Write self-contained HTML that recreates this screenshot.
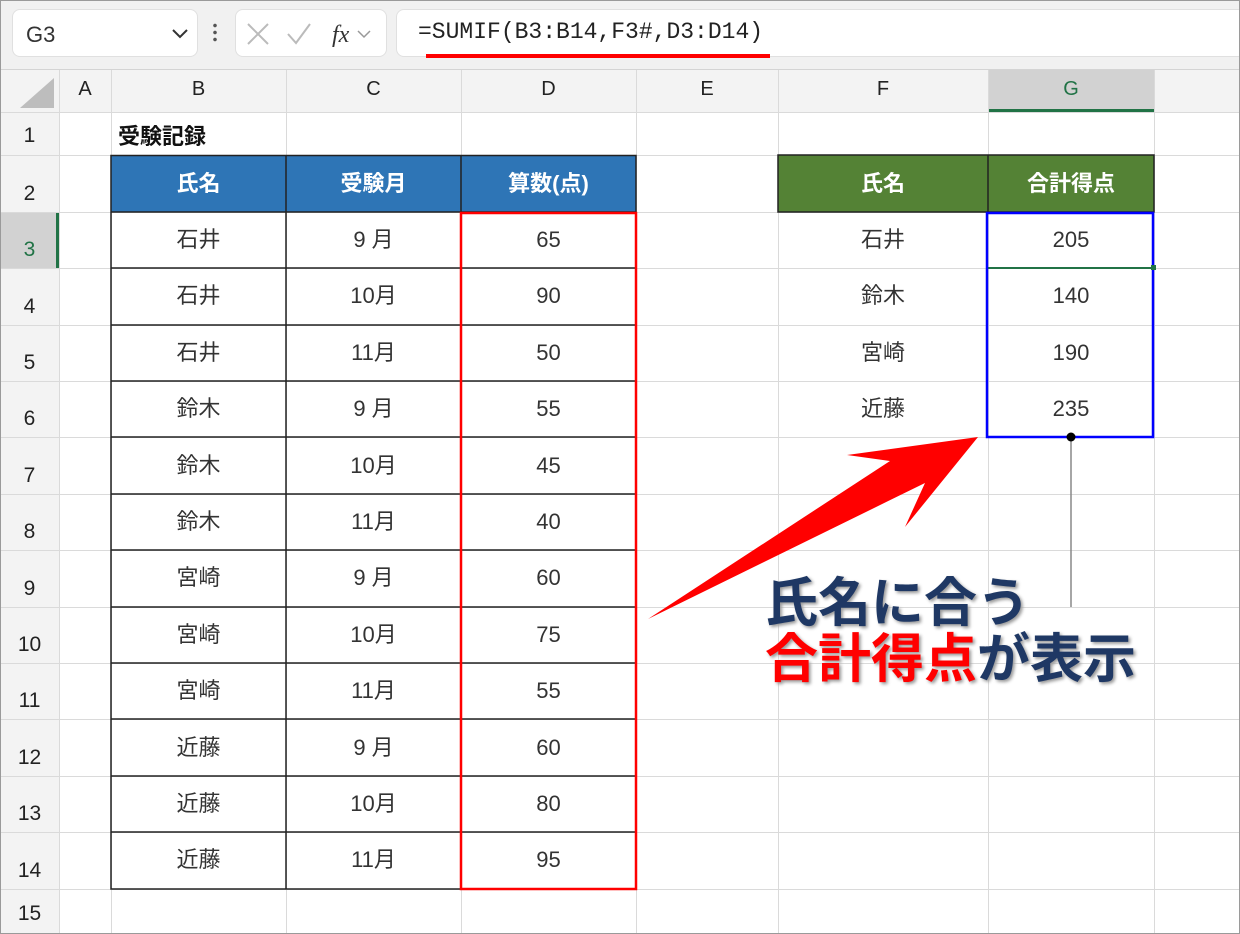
<!DOCTYPE html>
<html><head><meta charset="utf-8"><style>
*{margin:0;padding:0;box-sizing:border-box}
body{width:1240px;height:934px;position:relative;overflow:hidden;background:#fff;font-family:"Liberation Sans","Noto Sans CJK JP",sans-serif;}
.a{position:absolute}
.vl{position:absolute;top:70px;width:1px;height:864px;background:#dadada}
.hl{position:absolute;left:0;height:1px;width:1240px;background:#dadada}
.rn{position:absolute;left:0;width:59px;text-align:center;font-size:21px;color:#222;margin-top:2px}
.ch{position:absolute;top:72px;height:42px;line-height:34px;text-align:center;font-size:20px;color:#222;}
.c{position:absolute;text-align:center;font-size:22px;color:#333;}
</style></head><body>
<div class="a" style="left:0;top:0;width:1240px;height:70px;background:#f1f1f1;border-bottom:1px solid #d4d4d4"></div>
<div class="a" style="left:12px;top:9px;width:186px;height:48px;background:#fff;border:1px solid #e0e0e0;border-radius:8px"></div>
<div class="a" style="left:26px;top:22px;font-size:22px;color:#333">G3</div>
<svg class="a" style="left:170px;top:26px" width="20" height="14"><path d="M3 4 L10 11 L17 4" stroke="#333" stroke-width="2" fill="none"/></svg>
<div class="a" style="left:213px;top:22px;width:4px;height:22px;background:radial-gradient(circle,#555 1.6px,transparent 2px) 0 0/4px 7px"></div>
<div class="a" style="left:235px;top:9px;width:152px;height:48px;background:#fff;border:1px solid #e0e0e0;border-radius:8px"></div>
<svg class="a" style="left:244px;top:20px" width="140" height="28"><path d="M4 4 L24 24 M24 4 L4 24" stroke="#bbb" stroke-width="2"/><path d="M44 14 L52 23 L66 4" stroke="#bbb" stroke-width="2" fill="none"/><text x="88" y="22" font-family="Liberation Serif" font-style="italic" font-size="24" fill="#333">fx</text><path d="M114 11 L120 17 L126 11" stroke="#999" stroke-width="1.5" fill="none"/></svg>
<div class="a" style="left:396px;top:9px;width:850px;height:48px;background:#fff;border:1px solid #e0e0e0;border-radius:8px"></div>
<div class="a" style="left:418px;top:19px;font-family:'Liberation Mono',monospace;font-size:23px;color:#222;">=SUMIF(B3:B14,F3#,D3:D14)</div>
<div class="a" style="left:426px;top:54px;width:344px;height:4px;background:#f00"></div>
<div class="a" style="left:0;top:70px;width:1240px;height:42px;background:#f3f3f3"></div>
<div class="a" style="left:0;top:70px;width:59px;height:864px;background:#f3f3f3"></div>
<svg class="a" style="left:14px;top:76px" width="42" height="34"><path d="M40 2 L40 32 L6 32 Z" fill="#bdbdbd"/></svg>
<div class="a" style="left:988px;top:70px;width:166px;height:42px;background:#d2d2d2;border-bottom:3px solid #217346"></div>
<div class="a" style="left:0;top:212px;width:59px;height:56px;background:#d2d2d2;border-right:3px solid #217346"></div>
<div class="vl" style="left:59px"></div><div class="vl" style="left:111px"></div><div class="vl" style="left:286px"></div><div class="vl" style="left:461px"></div><div class="vl" style="left:636px"></div><div class="vl" style="left:778px"></div><div class="vl" style="left:988px"></div><div class="vl" style="left:1154px"></div>
<div class="hl" style="top:112px"></div><div class="hl" style="top:155px"></div><div class="hl" style="top:212px"></div><div class="hl" style="top:268px"></div><div class="hl" style="top:325px"></div><div class="hl" style="top:381px"></div><div class="hl" style="top:437px"></div><div class="hl" style="top:494px"></div><div class="hl" style="top:550px"></div><div class="hl" style="top:607px"></div><div class="hl" style="top:663px"></div><div class="hl" style="top:719px"></div><div class="hl" style="top:776px"></div><div class="hl" style="top:832px"></div><div class="hl" style="top:889px"></div>
<div class="ch" style="left:59px;width:52px">A</div><div class="ch" style="left:111px;width:175px">B</div><div class="ch" style="left:286px;width:175px">C</div><div class="ch" style="left:461px;width:175px">D</div><div class="ch" style="left:636px;width:142px">E</div><div class="ch" style="left:778px;width:210px">F</div><div class="ch" style="left:988px;width:166px;color:#217346">G</div>
<div class="rn" style="top:122px">1</div><div class="rn" style="top:180px">2</div><div class="rn" style="top:236px;color:#217346">3</div><div class="rn" style="top:293px">4</div><div class="rn" style="top:349px">5</div><div class="rn" style="top:405px">6</div><div class="rn" style="top:462px">7</div><div class="rn" style="top:518px">8</div><div class="rn" style="top:575px">9</div><div class="rn" style="top:631px">10</div><div class="rn" style="top:687px">11</div><div class="rn" style="top:744px">12</div><div class="rn" style="top:800px">13</div><div class="rn" style="top:857px">14</div><div class="rn" style="top:900px">15</div>
<div class="a" style="left:118px;top:119px;font-size:22px;font-weight:bold;color:#111">受験記録</div>
<div class="a" style="left:111px;top:155px;width:525px;height:57px;background:#2e75b6"></div>
<svg class="a" style="left:0;top:0" width="1240" height="934">
<g stroke="#222" stroke-width="1.5" fill="none">
<rect x="111" y="155.5" width="525" height="733.5"/>
<path d="M286 155V889 M461 155V889 M111 212H636 M111 268H636 M111 325H636 M111 381H636 M111 437H636 M111 494H636 M111 550H636 M111 607H636 M111 663H636 M111 719H636 M111 776H636 M111 832H636"/>
</g>
<rect x="778" y="155" width="376" height="57" fill="#548235" stroke="#222" stroke-width="1.5"/>
<path d="M988 155V212" stroke="#222" stroke-width="1.5"/>
<rect x="461" y="213" width="175" height="676" fill="none" stroke="#f00" stroke-width="2.5"/>
<path d="M988 268H1153" stroke="#217346" stroke-width="2"/>
<rect x="987" y="213" width="166" height="224" fill="none" stroke="#00f" stroke-width="2.5"/>
<rect x="1151" y="265" width="5" height="5" fill="#217346"/>
<path d="M1071 437V607" stroke="#888" stroke-width="1.5"/>
<circle cx="1071" cy="437" r="4.5" fill="#000"/>
<polygon points="978,437 905,527 925,483 648,619 890,461 847,455" fill="#f00"/>
</svg>
<div class="c" style="left:111px;top:155px;width:175px;line-height:57px;color:#fff;font-weight:bold">氏名</div>
<div class="c" style="left:286px;top:155px;width:175px;line-height:57px;color:#fff;font-weight:bold">受験月</div>
<div class="c" style="left:461px;top:155px;width:175px;line-height:57px;color:#fff;font-weight:bold">算数(点)</div>
<div class="c" style="left:778px;top:155px;width:210px;line-height:57px;color:#fff;font-weight:bold">氏名</div>
<div class="c" style="left:988px;top:155px;width:166px;line-height:57px;color:#fff;font-weight:bold">合計得点</div>
<div class="a" style="left:111px;top:212px;width:175px;line-height:56.4px;text-align:center;font-size:22px;color:#333">石井<br>石井<br>石井<br>鈴木<br>鈴木<br>鈴木<br>宮崎<br>宮崎<br>宮崎<br>近藤<br>近藤<br>近藤</div>
<div class="a" style="left:286px;top:212px;width:175px;line-height:56.4px;text-align:center;font-size:22px;color:#333">9 月<br>10月<br>11月<br>9 月<br>10月<br>11月<br>9 月<br>10月<br>11月<br>9 月<br>10月<br>11月</div>
<div class="a" style="left:461px;top:212px;width:175px;line-height:56.4px;text-align:center;font-size:22px;color:#333">65<br>90<br>50<br>55<br>45<br>40<br>60<br>75<br>55<br>60<br>80<br>95</div>
<div class="a" style="left:778px;top:212px;width:210px;line-height:56.4px;text-align:center;font-size:22px;color:#333">石井<br>鈴木<br>宮崎<br>近藤</div>
<div class="a" style="left:988px;top:212px;width:166px;line-height:56.4px;text-align:center;font-size:22px;color:#333">205<br>140<br>190<br>235</div>
<div class="a" style="left:765px;top:576px;font-size:53px;font-weight:bold;line-height:56px;color:#1f3864;letter-spacing:0px;text-shadow:2px 2px 3px #999,0 0 2px #fff;white-space:nowrap">氏名に合う<br><span style="color:#f00">合計得点</span>が表示</div>
<div class="a" style="left:0;top:0;width:1240px;height:934px;border:1px solid #9a9a9a"></div>
</body></html>
